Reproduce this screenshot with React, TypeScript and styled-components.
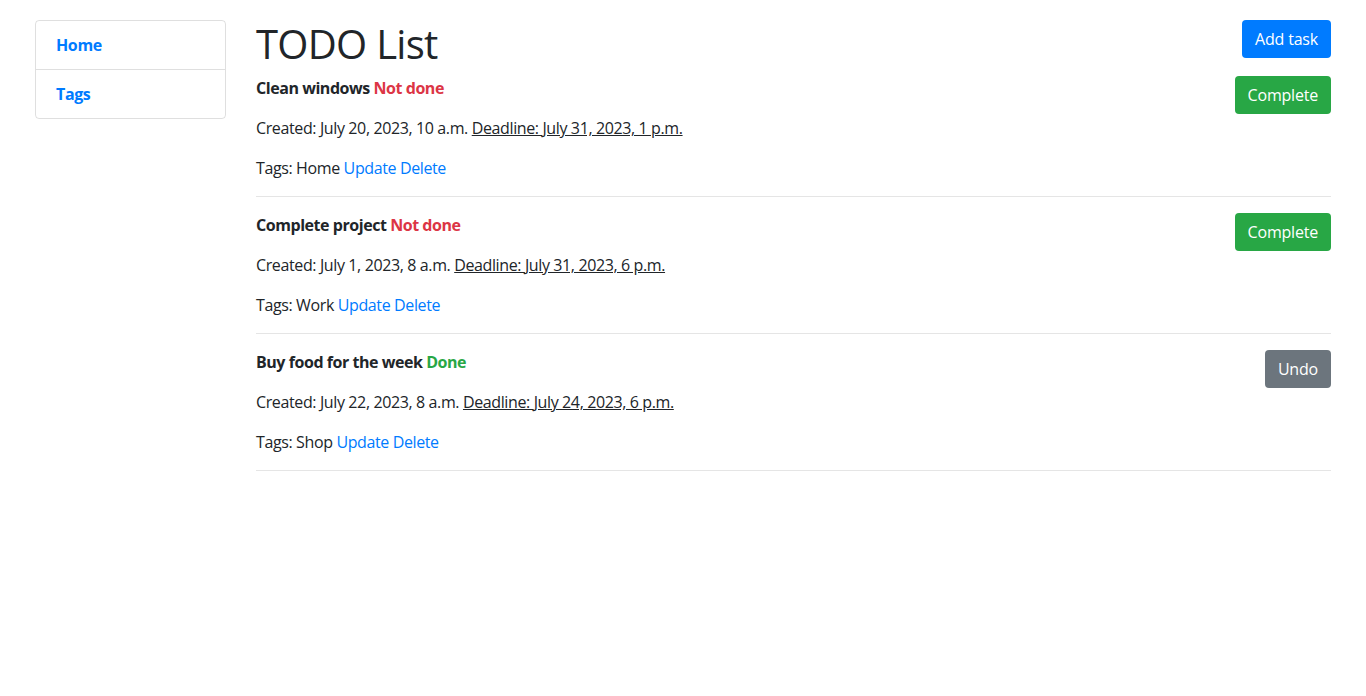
import React from "react";
import styled, { createGlobalStyle } from "styled-components";

const GlobalStyle = createGlobalStyle`
  * { box-sizing: border-box; }
  body {
    margin: 0;
    font-family: "Open Sans", "Noto Sans", sans-serif;
    font-size: 16px;
    line-height: 24px;
    color: #212529;
    background: #fff;
    letter-spacing: -0.38px;
  }
`;

const Layout = styled.div`
  display: grid;
  grid-template-columns: 191px 1fr;
  column-gap: 30px;
  padding: 20px 35px;
  align-items: start;
`;

const NavList = styled.nav`
  display: flex;
  flex-direction: column;
  border: 1px solid rgba(0, 0, 0, 0.125);
  border-radius: 4px;
`;

const NavItem = styled.a<{ $last?: boolean }>`
  display: block;
  padding: 12px 20px;
  color: #007bff;
  font-weight: 700;
  text-decoration: none;
  border-bottom: ${(p) => (p.$last ? "none" : "1px solid rgba(0,0,0,0.125)")};
`;

const Main = styled.main`
  display: flex;
  flex-direction: column;
`;

const Header = styled.div`
  display: flex;
  justify-content: space-between;
  align-items: flex-start;
  margin-bottom: 8px;
`;

const Title = styled.h1`
  margin: 0;
  font-size: 40px;
  font-weight: 500;
  line-height: 48px;
  letter-spacing: -0.7px;
`;

const Button = styled.button<{ $variant: "primary" | "success" | "secondary" }>`
  font-family: inherit;
  letter-spacing: -0.2px;
  font-size: 16px;
  line-height: 24px;
  padding: 6px 12px;
  border: 1px solid transparent;
  border-radius: 4px;
  color: #fff;
  cursor: pointer;
  background: ${(p) =>
    p.$variant === "primary" ? "#007bff" : p.$variant === "success" ? "#28a745" : "#6c757d"};
`;

const Task = styled.div`
  display: flex;
  justify-content: space-between;
  align-items: flex-start;
  border-bottom: 1px solid rgba(0, 0, 0, 0.1);
  margin-bottom: 16px;
`;

const TaskBody = styled.div`
  display: flex;
  flex-direction: column;
`;

const Line = styled.p`
  margin: 0 0 16px;
`;

const TaskName = styled.strong`
  font-weight: 700;
  letter-spacing: -0.45px;
`;

const Status = styled.span<{ $done: boolean }>`
  color: ${(p) => (p.$done ? "#28a745" : "#dc3545")};
`;

const Deadline = styled.u`
  text-decoration: underline;
`;

const ActionLink = styled.a`
  color: #007bff;
  text-decoration: none;
`;

type TaskT = {
  name: string;
  done: boolean;
  created: string;
  deadline: string;
  tag: string;
};

const tasks: TaskT[] = [
  { name: "Clean windows", done: false, created: "July 20, 2023, 10 a.m.", deadline: "July 31, 2023, 1 p.m.", tag: "Home" },
  { name: "Complete project", done: false, created: "July 1, 2023, 8 a.m.", deadline: "July 31, 2023, 6 p.m.", tag: "Work" },
  { name: "Buy food for the week", done: true, created: "July 22, 2023, 8 a.m.", deadline: "July 24, 2023, 6 p.m.", tag: "Shop" },
];

export default function App() {
  return (
    <>
      <GlobalStyle />
      <Layout>
        <NavList>
          <NavItem href="#">Home</NavItem>
          <NavItem href="#" $last>Tags</NavItem>
        </NavList>
        <Main>
          <Header>
            <Title>TODO List</Title>
            <Button $variant="primary">Add task</Button>
          </Header>
          {tasks.map((t) => (
            <Task key={t.name}>
              <TaskBody>
                <Line>
                  <TaskName>
                    {t.name} <Status $done={t.done}>{t.done ? "Done" : "Not done"}</Status>
                  </TaskName>
                </Line>
                <Line>
                  Created: {t.created} <Deadline>Deadline: {t.deadline}</Deadline>
                </Line>
                <Line>
                  Tags: {t.tag} <ActionLink href="#">Update</ActionLink> <ActionLink href="#">Delete</ActionLink>
                </Line>
              </TaskBody>
              <Button $variant={t.done ? "secondary" : "success"}>{t.done ? "Undo" : "Complete"}</Button>
            </Task>
          ))}
        </Main>
      </Layout>
    </>
  );
}
